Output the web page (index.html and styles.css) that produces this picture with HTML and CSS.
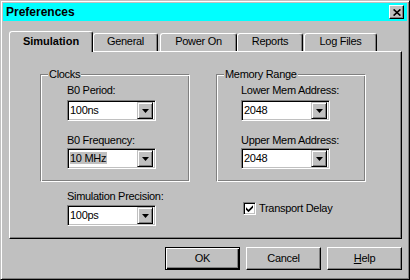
FILE: index.html
```html
<!DOCTYPE html>
<html>
<head>
<meta charset="utf-8">
<link rel="stylesheet" href="styles.css">
</head>
<body>
<div class="window">
  <div class="titlebar">
    <span class="title">Preferences</span>
    <div class="close"><svg width="8" height="7" viewBox="0 0 8 7"><path d="M0.6 0.4 L7.4 6.6 M7.4 0.4 L0.6 6.6" stroke="#000" stroke-width="1.6"/></svg></div>
  </div>
  <div class="tabs">
    <div class="tab active t-sim">Simulation</div>
    <div class="tab t-gen">General</div>
    <div class="tab t-pow">Power On</div>
    <div class="tab t-rep">Reports</div>
    <div class="tab t-log">Log Files</div>
  </div>
  <div class="panel">
    <div class="groups">
      <div class="group">
        <div class="legend">Clocks</div>
        <div class="fields">
          <div class="label first">B0 Period:</div>
          <div class="combo c-first"><span class="value">100ns</span><span class="drop"><svg width="7" height="4" viewBox="0 0 7 4"><path d="M0 0H7L3.5 4Z"/></svg></span></div>
          <div class="label second">B0 Frequency:</div>
          <div class="combo c-second"><span class="value"><span class="sel">10 MHz</span></span><span class="drop"><svg width="7" height="4" viewBox="0 0 7 4"><path d="M0 0H7L3.5 4Z"/></svg></span></div>
        </div>
      </div>
      <div class="group">
        <div class="legend">Memory Range</div>
        <div class="fields mem">
          <div class="label first">Lower Mem Address:</div>
          <div class="combo c-first"><span class="value">2048</span><span class="drop"><svg width="7" height="4" viewBox="0 0 7 4"><path d="M0 0H7L3.5 4Z"/></svg></span></div>
          <div class="label second">Upper Mem Address:</div>
          <div class="combo c-second"><span class="value">2048</span><span class="drop"><svg width="7" height="4" viewBox="0 0 7 4"><path d="M0 0H7L3.5 4Z"/></svg></span></div>
        </div>
      </div>
    </div>
    <div class="lower">
      <div class="col col-left">
        <div class="label">Simulation Precision:</div>
        <div class="combo c-prec"><span class="value">100ps</span><span class="drop"><svg width="7" height="4" viewBox="0 0 7 4"><path d="M0 0H7L3.5 4Z"/></svg></span></div>
      </div>
      <div class="col col-right">
        <div class="check-row">
          <span class="checkbox"><svg width="7" height="7" viewBox="0 0 7 7"><path d="M0 2.3 L2.5 4.8 L7 0.3 V2.7 L2.5 7.2 L0 4.7Z"/></svg></span>
          <span class="check-label">Transport Delay</span>
        </div>
      </div>
    </div>
  </div>
  <div class="buttons">
    <div class="btn default">OK</div>
    <div class="btn">Cancel</div>
    <div class="btn"><span><u>H</u>elp</span></div>
  </div>
</div>
</body>
</html>
```
FILE: styles.css
```css
* { box-sizing: border-box; }
body {
  margin: 0;
  font-family: "Liberation Sans", Arial, sans-serif;
  font-size: 11px;
  letter-spacing: -0.3px;
  line-height: 13px;
  color: #000;
  background: #c0c0c0;
}
.window {
  width: 410px;
  height: 280px;
  background: #c0c0c0;
  border: 1px solid;
  border-color: #c0c0c0 #000 #000 #c0c0c0;
  box-shadow: inset 1px 1px #fff, inset -1px -1px #808080;
  padding: 2px;
  display: flex;
  flex-direction: column;
}
.titlebar {
  height: 18px;
  flex: none;
  background: #00ffff;
  display: flex;
  align-items: center;
  justify-content: space-between;
  padding: 0 3px 0 3px;
}
.title {
  font-weight: bold;
  font-size: 12px;
  letter-spacing: 0;
}
.close {
  width: 15px;
  height: 14px;
  background: #c0c0c0;
  border: 1px solid;
  border-color: #fff #000 #000 #fff;
  box-shadow: inset -1px -1px #808080;
  display: flex;
  align-items: center;
  justify-content: center;
}
.tabs {
  display: flex;
  align-items: flex-end;
  height: 20px;
  margin-top: 10px;
  padding-left: 6px;
  flex: none;
}
.tab {
  height: 18px;
  border: 1px solid;
  border-bottom: none;
  border-color: #fff #000 transparent #fff;
  border-radius: 3px 3px 0 0;
  box-shadow: inset -1px 0 #808080;
  text-align: center;
  padding-top: 1px;
  line-height: 13px;
}
.tab.active {
  height: 21px;
  margin-bottom: -1px;
  font-weight: bold;
  font-size: 11px;
  letter-spacing: 0;
  position: relative;
  z-index: 1;
  background: #c0c0c0;
  padding-top: 3px;
}
.t-sim { width: 84px; }
.t-gen { width: 65px; }
.t-pow { width: 77px; margin-left: 2px; }
.t-rep { width: 66px; }
.t-log { width: 73px; margin-left: 1px; }
.panel {
  flex: none;
  height: 188px;
  margin: 0 5px 0 6px;
  border: 1px solid;
  border-color: #fff #000 #000 #fff;
  box-shadow: inset -1px -1px #808080;
  padding: 22px 0 0 30px;
}
.groups {
  display: flex;
  gap: 26px;
}
.group {
  width: 150px;
  height: 108px;
  display: flex;
  flex-direction: column;
  border: 1px solid;
  border-color: #808080 #fff #fff #808080;
  box-shadow: inset 1px 1px #fff, inset -1px -1px #808080;
}
.legend {
  align-self: flex-start;
  margin: -7px 0 0 7px;
  padding: 0 1px;
  background: #c0c0c0;
}
.fields {
  padding-left: 26px;
}
.fields.mem {
  padding-left: 24px;
}
.label.first { margin-top: 3px; }
.label.second { margin-top: 13px; }
.c-first { margin-top: 3px; }
.c-second { margin-top: 1px; }
.combo {
  width: 89px;
  height: 21px;
  display: flex;
  align-items: center;
  background: #fff;
  border: 1px solid;
  border-color: #808080 #fff #fff #808080;
  box-shadow: inset 1px 1px #000, inset -1px -1px #c0c0c0;
  padding: 2px;
}
.value {
  flex: 1;
  white-space: nowrap;
}
.sel {
  background: #c0c0c0;
  padding-right: 1px;
}
.drop {
  width: 16px;
  height: 17px;
  background: #c0c0c0;
  border: 1px solid;
  border-color: #c0c0c0 #000 #000 #c0c0c0;
  box-shadow: inset 1px 1px #fff, inset -1px -1px #808080;
  display: flex;
  align-items: center;
  justify-content: center;
}
.drop svg { display: block; }
.lower {
  display: flex;
  gap: 26px;
  margin-top: 8px;
}
.col {
  width: 150px;
  padding-left: 27px;
}
.c-prec { margin-top: 2px; }
.col-right { padding-top: 12px; }
.check-row {
  display: flex;
  align-items: center;
  gap: 3px;
}
.checkbox {
  width: 13px;
  height: 13px;
  background: #fff;
  border: 1px solid;
  border-color: #808080 #fff #fff #808080;
  box-shadow: inset 1px 1px #000, inset -1px -1px #c0c0c0;
  display: flex;
  align-items: center;
  justify-content: center;
}
.checkbox svg { display: block; }
.buttons {
  display: flex;
  justify-content: flex-end;
  gap: 6px;
  margin: 8px 5px 0 0;
}
.btn {
  width: 75px;
  height: 23px;
  display: flex;
  align-items: center;
  justify-content: center;
  border: 1px solid;
  border-color: #fff #000 #000 #fff;
  box-shadow: inset -1px -1px #808080;
}
.btn.default {
  border-color: #000;
  box-shadow: inset 1px 1px #fff, inset -1px -1px #000, inset -2px -2px #808080;
}
```
